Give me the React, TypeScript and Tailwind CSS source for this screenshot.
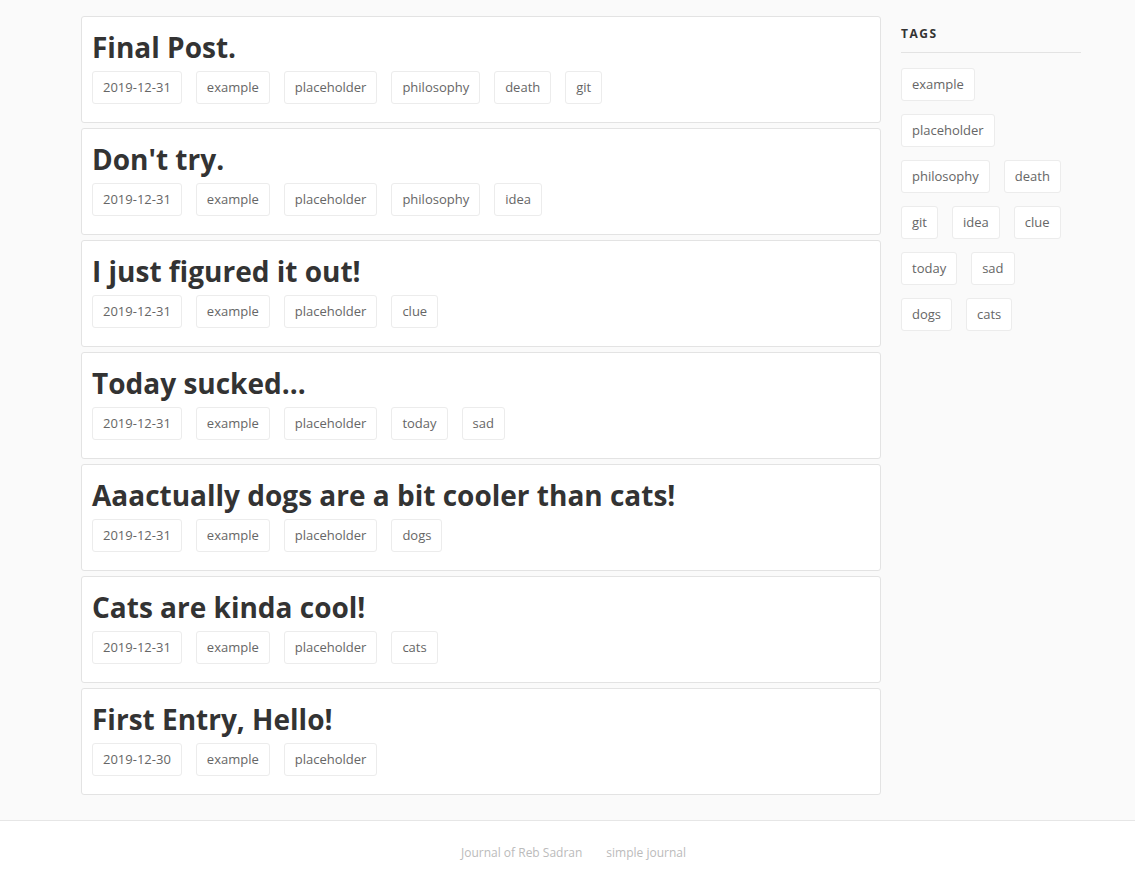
import React from 'react';

type Post = { title: string; date: string; tags: string[] };

const posts: Post[] = [
  { title: 'Final Post.', date: '2019-12-31', tags: ['example', 'placeholder', 'philosophy', 'death', 'git'] },
  { title: "Don't try.", date: '2019-12-31', tags: ['example', 'placeholder', 'philosophy', 'idea'] },
  { title: 'I just figured it out!', date: '2019-12-31', tags: ['example', 'placeholder', 'clue'] },
  { title: 'Today sucked...', date: '2019-12-31', tags: ['example', 'placeholder', 'today', 'sad'] },
  { title: 'Aaactually dogs are a bit cooler than cats!', date: '2019-12-31', tags: ['example', 'placeholder', 'dogs'] },
  { title: 'Cats are kinda cool!', date: '2019-12-31', tags: ['example', 'placeholder', 'cats'] },
  { title: 'First Entry, Hello!', date: '2019-12-30', tags: ['example', 'placeholder'] },
];

const allTags = ['example', 'placeholder', 'philosophy', 'death', 'git', 'idea', 'clue', 'today', 'sad', 'dogs', 'cats'];

const Tag: React.FC<{ label: string; className?: string }> = ({ label, className = '' }) => (
  <span className={`inline-block h-[33px] px-[10px] leading-[31px] text-[13px] text-[#666] bg-white border border-[#ececec] rounded-[3px] ${className}`}>
    {label}
  </span>
);

const App: React.FC = () => {
  return (
    <div className="min-h-[891px] flex flex-col bg-[#fafafa] font-['Open_Sans',sans-serif]">
      <div className="flex gap-[20px] pl-[81px] pt-[16px]">
        <main className="w-[800px] flex flex-col gap-[5px]">
          {posts.map((post) => (
            <article key={post.title} className="h-[107px] bg-white border border-[#e3e3e3] rounded-[3px] px-[10px] pt-[12px]">
              <h2 className="text-[28px] font-bold leading-[36px] text-[#333]">{post.title}</h2>
              <div className="flex flex-wrap gap-[14px] mt-[6px]">
                <Tag label={post.date} />
                {post.tags.map((t) => (
                  <Tag key={t} label={t} />
                ))}
              </div>
            </article>
          ))}
        </main>
        <aside className="w-[180px]">
          <h3 className="text-[12px] font-bold tracking-[1.5px] text-[#333] pt-[10px] pb-[10px] border-b border-[#e3e3e3] leading-[16px]">TAGS</h3>
          <div className="flex flex-wrap mt-[15px]">
            {allTags.map((t) => (
              <Tag key={t} label={t} className="mr-[14px] mb-[13px]" />
            ))}
          </div>
        </aside>
      </div>
      <footer className="mt-auto h-[71px] bg-white border-t border-[#e6e6e6] flex justify-center gap-[24px] pl-[12px] pt-[23px] text-[12px] leading-[18px] text-[#bbb]">
        <span>Journal of Reb Sadran</span>
        <span>simple journal</span>
      </footer>
    </div>
  );
};

export default App;
